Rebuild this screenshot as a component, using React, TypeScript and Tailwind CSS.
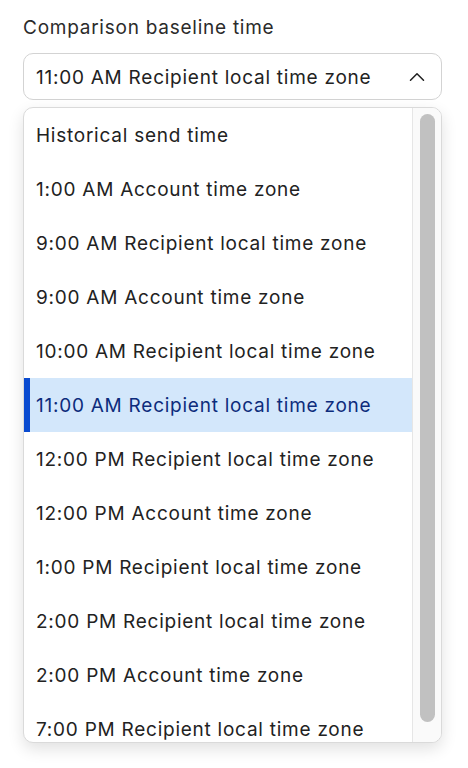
import { ChevronUp } from "lucide-react";

const options = [
  "Historical send time",
  "1:00 AM Account time zone",
  "9:00 AM Recipient local time zone",
  "9:00 AM Account time zone",
  "10:00 AM Recipient local time zone",
  "11:00 AM Recipient local time zone",
  "12:00 PM Recipient local time zone",
  "12:00 PM Account time zone",
  "1:00 PM Recipient local time zone",
  "2:00 PM Recipient local time zone",
  "2:00 PM Account time zone",
  "7:00 PM Recipient local time zone",
];

const selected = "11:00 AM Recipient local time zone";

export default function App() {
  return (
    <div className="min-h-[768px] bg-white font-['Inter',sans-serif] text-[19px] tracking-[0.75px] text-[#222]">
      <div className="flex w-[442px] flex-col pl-[23px] pt-[16px]">
        <label className="leading-[24px] text-[#2b2b2b]">Comparison baseline time</label>
        <button className="mt-[13px] flex h-[47px] items-center justify-between rounded-[10px] border border-[#d3d3d3] bg-white pl-[12px] pr-[11px] text-left">
          <span className="pt-[3px]">{selected}</span>
          <ChevronUp size={26} strokeWidth={1.4} className="text-[#222]" />
        </button>
        <div className="mt-[7px] flex h-[636px] overflow-hidden rounded-[10px] border border-[#dadada] bg-white shadow-[0_6px_16px_rgba(0,0,0,0.12)]">
          <ul className="flex-1 overflow-hidden">
            {options.map((o) => {
              const active = o === selected;
              return (
                <li
                  key={o}
                  className={
                    active
                      ? "flex h-[54px] items-center whitespace-nowrap border-l-[6px] border-[#0a4bd0] bg-[#d3e7fb] pl-[6px] pt-[3px] text-[#0d2c7c]"
                      : "flex h-[54px] items-center whitespace-nowrap pl-[12px] pt-[3px] text-[#222]"
                  }
                >
                  {o}
                </li>
              );
            })}
          </ul>
          <div className="flex w-[29px] shrink-0 justify-center border-l border-[#e6e6e6] bg-[#fafafa] pt-[6px]">
            <div className="h-[608px] w-[15px] rounded-full bg-[#c1c1c1]" />
          </div>
        </div>
      </div>
    </div>
  );
}
